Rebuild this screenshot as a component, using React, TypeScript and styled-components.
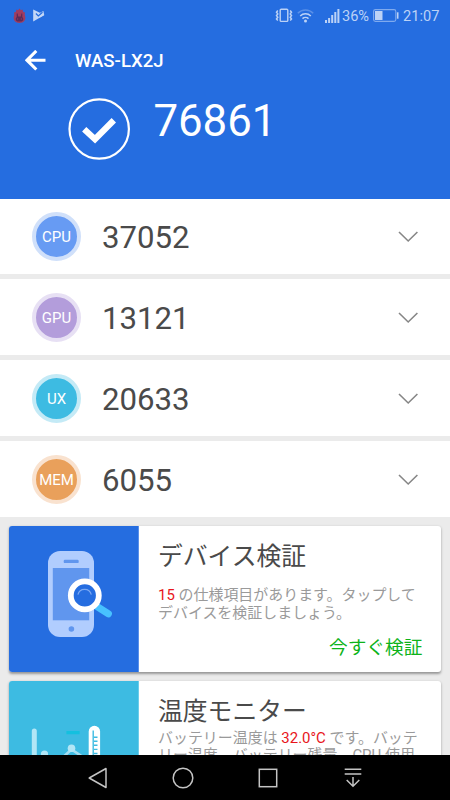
import { ReactNode } from "react";
import styled, { createGlobalStyle } from "styled-components";

const GlobalStyle = createGlobalStyle`
  * {
    box-sizing: border-box;
  }
  body {
    margin: 0;
    overflow: hidden;
    font-family: Roboto, "Noto Sans CJK JP", sans-serif;
  }
  svg {
    display: block;
    flex: none;
  }
`;

const Screen = styled.div`
  width: 450px;
  height: 800px;
  display: flex;
  flex-direction: column;
  background: #ebebeb;
  overflow: hidden;
`;

const Header = styled.header`
  flex: none;
  height: 198.6px;
  background: #256de0;
  color: #fff;
`;

const StatusBar = styled.div`
  height: 30px;
  display: flex;
  align-items: center;
  padding: 1px 10.6px 0 13px;
  color: #bcd2f6;
  font-size: 14.6px;
  line-height: 30px;
`;

const StatusIcons = styled.div`
  display: flex;
  align-items: center;
  gap: 7px;
  margin-right: auto;
`;

const StatusItem = styled.span<{ $left: number }>`
  margin-left: ${(p) => p.$left}px;
`;

const TitleBar = styled.div`
  height: 60px;
  display: flex;
  align-items: center;
  padding-left: 25px;
  gap: 29px;
`;

const Title = styled.h1`
  margin: 0;
  padding-top: 1px;
  font-size: 18.6px;
  font-weight: 500;
`;

const Total = styled.div`
  display: flex;
  align-items: flex-start;
  padding: 8px 0 0 68px;
  gap: 23.4px;
`;

const TotalScore = styled.div`
  font-size: 43.8px;
  line-height: 47px;
`;

const Scores = styled.section`
  flex: none;
  display: flex;
  flex-direction: column;
  gap: 5.1px;
`;

const ScoreRow = styled.div`
  height: 75.8px;
  display: flex;
  align-items: center;
  padding: 0 32px;
  background: #fff;
`;

const Badge = styled.div<{ $color: string; $ring: string }>`
  width: 49px;
  height: 49px;
  display: flex;
  align-items: center;
  justify-content: center;
  border: 4px solid ${(p) => p.$ring};
  border-radius: 50%;
  background: ${(p) => p.$color};
  color: #fff;
  font-size: 15px;
  line-height: 18px;
  padding-top: 2px;
`;

const Score = styled.div`
  flex: 1;
  padding: 4px 0 0 21px;
  color: #4a4a4a;
  font-size: 31.2px;
  line-height: 38px;
`;

const Cards = styled.section`
  flex: 1;
  min-height: 0;
  overflow: hidden;
  display: flex;
  flex-direction: column;
  gap: 9px;
  padding: 8.6px 9px 0;
`;

const Card = styled.article`
  flex: none;
  height: 146px;
  display: flex;
  border-radius: 3px;
  background: #fff;
  box-shadow: 0 1.5px 2.5px rgba(0, 0, 0, 0.36);
  overflow: hidden;
`;

const Picture = styled.div<{ $color: string; $edge: string }>`
  width: 130px;
  background: ${(p) => p.$color};
  border-right: 1px solid ${(p) => p.$edge};
`;

const CardBody = styled.div`
  flex: 1;
  display: flex;
  flex-direction: column;
  padding: 13px 18.6px 0 19px;
  white-space: nowrap;
`;

const CardTitle = styled.h2`
  margin: 0;
  color: #4a4a4a;
  font-size: 24.8px;
  font-weight: 400;
  line-height: 36px;
`;

const CardText = styled.p<{ $top: number }>`
  margin: ${(p) => p.$top}px 0 0;
  color: #9a9a9a;
  font-size: 14.96px;
  line-height: 17.5px;
`;

const Highlight = styled.span`
  color: #e8151b;
`;

const Action = styled.div`
  align-self: flex-end;
  margin-top: 12.4px;
  color: #0db31a;
  font-size: 18.7px;
  line-height: 26px;
`;

const NavBar = styled.nav`
  flex: none;
  height: 45px;
  display: flex;
  align-items: center;
  justify-content: center;
  gap: 61px;
  background: #000;
`;

interface CardProps {
  title: string;
  textTop: number;
  color: string;
  edge: string;
  picture: ReactNode;
  action?: string;
  children: ReactNode;
}

const scores = [
  { label: "CPU", value: "37052", color: "#679bf3", ring: "#d0e0fa" },
  { label: "GPU", value: "13121", color: "#b39ddb", ring: "#e7e0f4" },
  { label: "UX", value: "20633", color: "#3dbbe2", ring: "#c4eaf6" },
  { label: "MEM", value: "6055", color: "#e9a05b", ring: "#f9e2cf" },
];

const FlameIcon = () => (
  <svg width="13" height="16" viewBox="0 0 13 16">
    <path
      d="M6.5 .5 8 2.3 9.5 1.5 10.3 4 12 4.5 11.7 7C13.2 10 12.3 15 6.5 15S-.2 10 1.3 7L1 4.5 2.8 4 3.5 1.5 5 2.3Z"
      fill="#a03c60"
    />
    <path
      d="M3.7 5.6h1l.5 3h2.6l.5-3h1v3.3l.9 1.4v2L8.7 13.6H4.3l-1.5-1.3v-2l.9-1.4Z"
      fill="#5c2b58"
    />
    <path d="M4 11h1.2M7.8 11H9" stroke="#a03c60" />
  </svg>
);

const PlayCheckIcon = () => (
  <svg width="12" height="13" viewBox="0 0 12 13">
    <path d="M.2.5 11.4 5.9.2 12.5Z" fill="#c3d7f7" />
    <path d="m7 3.7 3.4-1.6.8 4-5 3Z" fill="#c3d7f7" />
    <path d="m2.9 4.5 2.4 2.5 4.2-3.7" fill="none" stroke="#256de0" strokeWidth="1.2" />
  </svg>
);

const VibrateIcon = () => (
  <svg width="18" height="15" viewBox="0 0 18 15" fill="none" stroke="#bcd2f6">
    <rect x="5.2" y="1.2" width="7.6" height="12.2" rx="1" strokeWidth="1.4" />
    <path
      d="m2.8 2.5-1.3 1.7 1.3 1.7-1.3 1.7 1.3 1.7-1.3 1.7 1.3 1.4M15.2 2.5l1.3 1.7-1.3 1.7 1.3 1.7-1.3 1.7 1.3 1.7-1.3 1.4"
      strokeWidth="1.5"
    />
  </svg>
);

const WifiIcon = () => (
  <svg width="17" height="14" viewBox="0 0 17 14" fill="none" stroke="#bcd2f6" strokeWidth="1.5">
    <path d="M.8 4.3a10.7 10.7 0 0 1 15.4 0" opacity=".35" />
    <path d="M3.2 7a7.5 7.5 0 0 1 10.6 0M5.5 9.6a4.3 4.3 0 0 1 6 0" />
    <circle cx="8.5" cy="12" r="1.5" fill="#bcd2f6" stroke="none" />
  </svg>
);

const SignalIcon = () => (
  <svg width="15" height="14" viewBox="0 0 15 14" fill="#bcd2f6">
    <path d="M0 11h2v3H0ZM3.1 9h2v5h-2ZM6.2 6h2v8h-2ZM9.3 3h2v11h-2ZM12.4 0h2v14h-2Z" />
  </svg>
);

const BatteryIcon = () => (
  <svg width="26" height="13" viewBox="0 0 26 13">
    <rect x=".6" y=".6" width="22.2" height="11.8" rx="1.8" fill="none" stroke="#7faaee" strokeWidth="1.1" />
    <rect x="2" y="2" width="7.5" height="9" fill="#bcd2f6" />
    <path d="M24.7 3.3v6.4" stroke="#bcd2f6" strokeWidth="1.6" />
  </svg>
);

const BackArrow = () => (
  <svg width="21" height="21" viewBox="0 0 21 21" fill="none" stroke="#fff" strokeWidth="3.1">
    <path d="M20.5 10.2H2M11.3 .9 2 10.2l9.3 9.3" />
  </svg>
);

const CheckCircle = () => (
  <svg width="62" height="62" viewBox="0 0 62 62" fill="none" stroke="#fff">
    <circle cx="31.2" cy="31" r="29.7" strokeWidth="2.2" />
    <path d="m16.2 31.2 10.8 10L45.8 22.2" strokeWidth="6.2" />
  </svg>
);

const Chevron = () => (
  <svg width="20" height="14" viewBox="0 0 20 14" fill="none" stroke="#868686" strokeWidth="1.6">
    <path d="m1 3 9.2 9 9.2-9" />
  </svg>
);

const PhonePicture = () => (
  <svg width="129" height="146" viewBox="0 0 129 146">
    <rect x="39" y="25" width="46" height="86" rx="12" fill="#b1cdfe" />
    <rect x="54.7" y="33.7" width="15" height="3.4" rx="1.2" fill="#6096ee" />
    <rect x="43.8" y="42" width="36.4" height="52.3" fill="#6096ee" />
    <circle cx="62.4" cy="103" r="2.8" fill="#6096ee" />
    <path d="m88 80.5 11.3 7.2" stroke="#48c2ff" strokeWidth="7.2" strokeLinecap="round" />
    <circle cx="75.8" cy="69.4" r="14" fill="#256de0" stroke="#fff" strokeWidth="5.8" />
    <path d="M68.9 68.6a6.9 6.9 0 0 1 13.4 0" fill="none" stroke="#7ca9f3" strokeWidth="1.2" />
  </svg>
);

const ThermoPicture = () => (
  <svg width="129" height="146" viewBox="0 0 129 146">
    <path d="M25.3 50v60h60" fill="none" stroke="#b2e6f6" strokeWidth="5" strokeLinecap="round" />
    <path d="M59 51.6h10" stroke="#14c0df" strokeWidth="3.2" strokeLinecap="square" />
    <path d="m25 88 10.5-15 11 10 16-14.5L80 80" fill="none" stroke="#a5def1" strokeWidth="2.6" />
    <circle cx="35.5" cy="73" r="3.6" fill="#b2e6f6" />
    <circle cx="62.5" cy="67.3" r="3.8" fill="#b2e6f6" />
    <rect x="79.7" y="44.8" width="11.4" height="58" rx="5.7" fill="#fff" />
    <path d="M84.2 49.5V90M85 56.2h3.5M85 60.2h3.5M85 64.3h3.5M85 68.4h3.5M85 72.5h3.5" stroke="#3dbbe2" strokeWidth="1.4" />
  </svg>
);

const InfoCard = ({ title, textTop, color, edge, picture, action, children }: CardProps) => (
  <Card>
    <Picture $color={color} $edge={edge}>
      {picture}
    </Picture>
    <CardBody>
      <CardTitle>{title}</CardTitle>
      <CardText $top={textTop}>{children}</CardText>
      {action && <Action>{action}</Action>}
    </CardBody>
  </Card>
);

const App = () => {
  return (
    <>
      <GlobalStyle />
      <Screen>
        <Header>
          <StatusBar>
            <StatusIcons>
              <FlameIcon />
              <PlayCheckIcon />
            </StatusIcons>
            <VibrateIcon />
            <StatusItem $left={4}>
              <WifiIcon />
            </StatusItem>
            <StatusItem $left={11.4}>
              <SignalIcon />
            </StatusItem>
            <StatusItem $left={1.8}>36%</StatusItem>
            <StatusItem $left={4}>
              <BatteryIcon />
            </StatusItem>
            <StatusItem $left={4}>21:07</StatusItem>
          </StatusBar>
          <TitleBar>
            <BackArrow />
            <Title>WAS-LX2J</Title>
          </TitleBar>
          <Total>
            <CheckCircle />
            <TotalScore>76861</TotalScore>
          </Total>
        </Header>
        <Scores>
          {scores.map((s) => (
            <ScoreRow key={s.label}>
              <Badge $color={s.color} $ring={s.ring}>
                {s.label}
              </Badge>
              <Score>{s.value}</Score>
              <Chevron />
            </ScoreRow>
          ))}
        </Scores>
        <Cards>
          <InfoCard
            title="デバイス検証"
            textTop={12.6}
            color="#256de0"
            edge="#5b91ea"
            picture={<PhonePicture />}
            action="今すぐ検証"
          >
            <Highlight>15</Highlight> の仕様項目があります。タップして
            <br />
            デバイスを検証しましょう。
          </InfoCard>
          <InfoCard
            title="温度モニター"
            textTop={0}
            color="#3dbbe2"
            edge="#6dcdea"
            picture={<ThermoPicture />}
          >
            バッテリー温度は <Highlight>32.0°C</Highlight> です。バッテ
            <br />
            リー温度、バッテリー残量、CPU 使用
          </InfoCard>
        </Cards>
        <NavBar>
          <svg width="24" height="24" viewBox="0 0 24 24" fill="none" stroke="#c4c4c4" strokeWidth="1.5">
            <path d="M20 2.5v19L3.2 12Z" strokeLinejoin="round" />
          </svg>
          <svg width="24" height="24" viewBox="0 0 24 24" fill="none" stroke="#c4c4c4" strokeWidth="1.5">
            <circle cx="12" cy="12" r="9.8" />
          </svg>
          <svg width="24" height="24" viewBox="0 0 24 24" fill="none" stroke="#c4c4c4" strokeWidth="1.5">
            <rect x="3.3" y="3.3" width="17.4" height="17.4" />
          </svg>
          <svg width="24" height="24" viewBox="0 0 24 24" fill="none" stroke="#c4c4c4" strokeWidth="1.5">
            <path d="M3.7 3.3h16.6M3.7 8h16.6M12 11v9.5M5.7 14l6.3 6.3 6.3-6.3" />
          </svg>
        </NavBar>
      </Screen>
    </>
  );
};

export default App;
